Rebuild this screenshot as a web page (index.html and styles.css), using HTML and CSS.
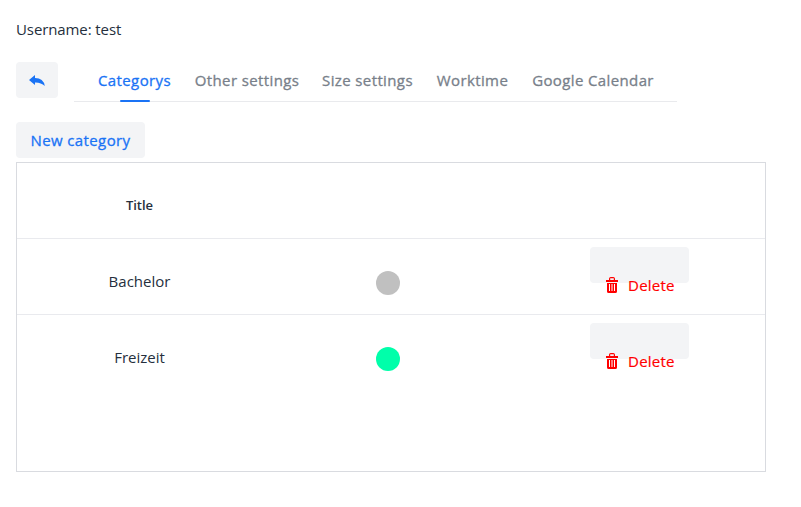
FILE: index.html
```html
<!DOCTYPE html>
<html lang="en">
<head>
<meta charset="utf-8">
<title>Settings</title>
<link rel="stylesheet" href="styles.css">
</head>
<body>
<svg width="0" height="0" class="defs">
  <symbol id="trash" viewBox="0 0 12 16">
    <path fill="currentColor" fill-rule="evenodd" d="M3 3V1.800Q3 0 4.800 0h2.400Q9 0 9 1.800V3h3v2H0V3zM4.200 3h3.600V1.200H4.200zM1 6h10v8.400q0 1.600-1.600 1.600H2.600Q1 16 1 14.400zm2 1v7h1V7zm2.500 0v7h1V7zM8 7v7h1V7z"/>
  </symbol>
</svg>
<p class="user"><span>Username: test</span></p>
<div class="bar">
  <button class="btn back" aria-label="Back">
    <svg width="16" height="12" viewBox="0 0 16 12"><path fill="currentColor" d="M0 5 6 0v3q8.500 0 9.800 8Q12 7.300 6 7.500V10z"/></svg>
  </button>
  <nav class="tabs">
    <a class="tab categorys active">Categorys</a>
    <a class="tab other">Other settings</a>
    <a class="tab size">Size settings</a>
    <a class="tab worktime">Worktime</a>
    <a class="tab calendar">Google Calendar</a>
  </nav>
</div>
<button class="btn new">New category</button>
<div class="table">
  <div class="row head"><div class="cell">Title</div><div></div><div></div></div>
  <div class="row">
    <div class="cell bachelor">Bachelor</div>
    <div class="cell"><i class="dot grey"></i></div>
    <div class="cell action"><button class="btn delete"><svg width="12" height="16"><use href="#trash"/></svg><span>Delete</span></button></div>
  </div>
  <div class="row">
    <div class="cell freizeit">Freizeit</div>
    <div class="cell"><i class="dot green"></i></div>
    <div class="cell action"><button class="btn delete"><svg width="12" height="16"><use href="#trash"/></svg><span>Delete</span></button></div>
  </div>
</div>
</body>
</html>
```
FILE: styles.css
```css
* { box-sizing: border-box; }
body {
  margin: 0;
  padding: 17px 16px;
  background: #fff;
  color: #252f3d;
  font: 15px/24px "Open Sans", "Noto Sans", sans-serif;
}
.defs { display: block; position: absolute; }
.user { margin: 0 0 21px; letter-spacing: -0.1px; }
.bar { display: flex; gap: 16px; margin-bottom: 20px; }
.btn {
  display: block;
  height: 36px;
  padding: 0;
  border: 0;
  border-radius: 4px;
  background: #f3f4f6;
  color: #1a73f5;
  font: 500 15px/36px "Open Sans", "Noto Sans", sans-serif;
}
.back { width: 42px; }
.back svg { display: block; margin: 1px auto 0; }
.tabs {
  display: flex;
  width: 603px;
  height: 40px;
  padding: 0 12px;
  border-bottom: 1px solid #e9eaed;
  color: #78808a;
  font-weight: 500;
  line-height: 37px;
}
.tab { position: relative; text-align: center; white-space: nowrap; }
.tab, .new {
  letter-spacing: 0.38px;
  -webkit-text-stroke: 0.3px currentColor;
}
.categorys { width: 97px; }
.other { width: 128px; }
.size { width: 113px; }
.worktime { width: 97px; }
.calendar { width: 144px; }
.active { color: #1a73f5; }
.active::after {
  content: "";
  position: absolute;
  left: 34px;
  bottom: -1px;
  width: 30px;
  height: 2px;
  border-radius: 1px;
  background: #1a73f5;
}
.new { width: 129px; margin-bottom: 4px; }
.table { width: 750px; height: 310px; border: 1px solid #d9dbe0; }
.row {
  display: grid;
  grid-template-columns: 245px 252px 251px;
  height: 76px;
  border-bottom: 1px solid #e9eaee;
}
.row:last-child { border-bottom: 0; }
.cell { padding-top: 30px; text-align: center; }
.head { font-size: 13px; font-weight: 600; }
.dot {
  display: block;
  width: 24px;
  height: 24px;
  margin: 2px auto 0;
  border-radius: 50%;
}
.grey { background: #c0c0c0; }
.green { background: #00ffaa; }
.action { padding-top: 8px; }
.delete {
  display: flex;
  gap: 10px;
  width: 99px;
  margin: 0 auto;
  padding: 30px 0 0 16px;
  color: #f00;
  line-height: 16px;
  letter-spacing: 0.25px;
  -webkit-text-stroke: 0.2px currentColor;
}
.delete svg { flex: none; }
```
